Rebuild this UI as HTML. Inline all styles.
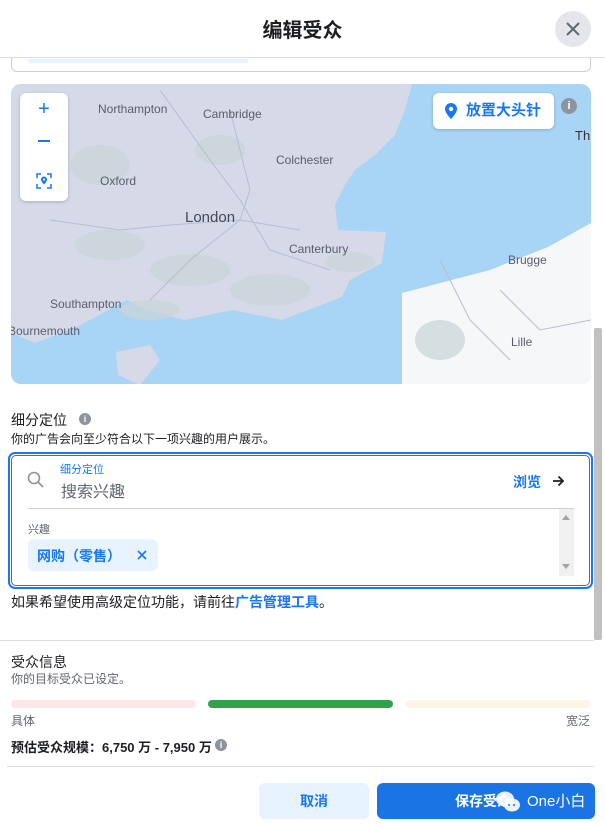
<!DOCTYPE html>
<html><head><meta charset="utf-8"><style>
*{margin:0;padding:0;box-sizing:border-box}
body{width:605px;height:826px;overflow:hidden;background:#fff;font-family:"Liberation Sans","Noto Sans CJK SC",sans-serif;position:relative;color:#1c1e21}
.a{position:absolute}
</style></head><body>
<div class="a" style="left:0;top:0;width:605px;height:58px;border-bottom:1px solid #dadde1;background:#fff;z-index:3">
 <div class="a" style="left:0;width:605px;top:14px;text-align:center;font-size:20px;font-weight:bold">编辑受众</div>
 <div class="a" style="left:555px;top:11px;width:36px;height:36px;border-radius:50%;background:#e4e6eb"></div>
 <svg class="a" style="left:563px;top:19px" width="20" height="20"><path d="M4 4L16 16M16 4L4 16" stroke="#606770" stroke-width="2"/></svg>
</div>
<div class="a" style="left:11px;top:50px;width:580px;height:22px;border:1px solid #ccd0d5;border-top:none;border-radius:0 0 6px 6px"></div>
<div class="a" style="left:28px;top:59px;width:220px;height:4px;background:#e7f3ff"></div>

<svg class="a" style="left:11px;top:84px;border-radius:10px" width="580" height="300" viewBox="11 84 580 300">
<rect x="11" y="84" width="580" height="300" fill="#a8d4f5"/>
<path d="M11 84L412 84L405 110L395 135L375 155L355 170L345 185L335 205L338 230L386 232L382 263L350 280L342 297L282 320L232 310L185 320L147 310L127 300L77 327L35 343L11 333Z" fill="#d5d9e8"/>
<path d="M116 352L150 345L160 360L140 385L118 375Z" fill="#d5d9e8"/>
<path d="M402 384L402 293L490 270L548 247L591 223L591 384Z" fill="#f6f7f9"/>
<g fill="#c9d6d8" opacity=".75"><ellipse cx="100" cy="165" rx="30" ry="20"/><ellipse cx="110" cy="245" rx="35" ry="15"/><ellipse cx="190" cy="270" rx="40" ry="16"/><ellipse cx="270" cy="290" rx="40" ry="16"/><ellipse cx="150" cy="310" rx="30" ry="10"/><ellipse cx="350" cy="262" rx="25" ry="10"/><ellipse cx="440" cy="340" rx="25" ry="20"/><ellipse cx="220" cy="150" rx="25" ry="15"/></g>
<g stroke="#b8bdd0" fill="none" stroke-width="1"><path d="M160 90L210 160L240 200L270 250L330 270"/><path d="M230 110L250 190L240 220"/><path d="M50 220L120 230L170 225L240 220L300 230"/><path d="M240 220L190 260L150 300"/><path d="M440 260L470 320L510 360M500 290L540 330L591 320"/></g>
<g font-family="Liberation Sans,sans-serif" font-size="12" fill="#5a5e6c">
<text x="98" y="113">Northampton</text><text x="203" y="118">Cambridge</text><text x="276" y="164">Colchester</text><text x="100" y="185">Oxford</text>
<text x="185" y="222" font-size="15" fill="#454955">London</text><text x="289" y="253">Canterbury</text><text x="50" y="308">Southampton</text><text x="8" y="335">Bournemouth</text><text x="508" y="264">Brugge</text><text x="511" y="346">Lille</text><text x="575" y="140" font-size="13" fill="#333">Th</text></g>
</svg>
<div class="a" style="left:20px;top:93px;width:48px;height:108px;background:#fff;border-radius:6px;box-shadow:0 1px 3px rgba(0,0,0,.2)">
 <div class="a" style="left:0;width:48px;top:5px;text-align:center;color:#1877f2;font-size:20px">+</div>
 <div class="a" style="left:18px;top:47px;width:12px;height:2px;background:#1877f2"></div>
 <svg class="a" style="left:16px;top:80px" width="16" height="16"><path d="M1 5V1H5M11 1H15V5M15 11V15H11M5 15H1V11" stroke="#1877f2" fill="none" stroke-width="1.5"/><path d="M8 3.5a3 3 0 0 1 3 3c0 2-3 5-3 5s-3-3-3-5a3 3 0 0 1 3-3z" fill="#1877f2"/><circle cx="8" cy="6.5" r="1.1" fill="#fff"/></svg>
</div>
<div class="a" style="left:433px;top:93px;width:121px;height:36px;background:#fff;border-radius:6px;box-shadow:0 1px 3px rgba(0,0,0,.2);color:#1877f2;font-weight:bold;font-size:15px;line-height:36px;padding-left:33px">放置大头针</div>
<svg class="a" style="left:444px;top:102px" width="14" height="18"><path d="M7 1a6 6 0 0 1 6 6c0 4-6 10-6 10S1 11 1 7a6 6 0 0 1 6-6z" fill="#1877f2"/><circle cx="7" cy="7" r="2.2" fill="#fff"/></svg>
<div class="a" style="left:561px;top:98px;width:16px;height:16px;border-radius:50%;background:#8d949e;color:#fff;font-size:11px;font-weight:bold;text-align:center;line-height:16px">i</div>

<div class="a" style="left:594px;top:328px;width:8px;height:312px;background:#c1c1c1;border-radius:2px"></div>

<div class="a" style="left:11px;top:410px;font-size:14px">细分定位</div>
<div class="a" style="left:79px;top:413px;width:12px;height:12px;border-radius:50%;background:#8d949e;color:#fff;font-size:9px;font-weight:bold;text-align:center;line-height:12px">i</div>
<div class="a" style="left:11px;top:430px;font-size:12px;color:#1c1e21">你的广告会向至少符合以下一项兴趣的用户展示。</div>
<div class="a" style="left:8px;top:452px;width:585px;height:137px;border:2px solid #1877f2;border-radius:7px"></div>
<div class="a" style="left:11px;top:455px;width:579px;height:131px;border:1px solid #606770;border-radius:5px"></div>
<svg class="a" style="left:27px;top:471px" width="18" height="18"><circle cx="7" cy="7" r="5.5" stroke="#8d949e" stroke-width="1.6" fill="none"/><path d="M11 11L16 16" stroke="#8d949e" stroke-width="1.6"/></svg>
<div class="a" style="left:60px;top:461px;font-size:11px;color:#1877f2">细分定位</div>
<div class="a" style="left:61px;top:478px;font-size:16px;color:#606770">搜索兴趣</div>
<div class="a" style="left:513px;top:472px;font-size:14px;font-weight:bold;color:#1877f2">浏览</div>
<svg class="a" style="left:551px;top:474px" width="14" height="14"><path d="M2 7H12M7.5 2.5L12 7L7.5 11.5" stroke="#1c1e21" stroke-width="1.8" fill="none"/></svg>
<div class="a" style="left:28px;top:508px;width:546px;height:1px;background:#ccd0d5"></div>
<div class="a" style="left:559px;top:509px;width:15px;height:67px;background:#f0f0f0"></div>
<div class="a" style="left:562px;top:515px;border:4px solid transparent;border-bottom:5px solid #a3a3a3;border-top:none"></div>
<div class="a" style="left:562px;top:564px;border:4px solid transparent;border-top:5px solid #a3a3a3;border-bottom:none"></div>
<div class="a" style="left:28px;top:521px;font-size:11px;color:#606770">兴趣</div>
<div class="a" style="left:28px;top:539px;width:130px;height:32px;background:#e7f3ff;border-radius:6px"></div>
<div class="a" style="left:37px;top:546px;font-size:14px;font-weight:bold;color:#1877f2">网购（零售）</div>
<svg class="a" style="left:136px;top:549px" width="12" height="12"><path d="M2 2L10 10M10 2L2 10" stroke="#1877f2" stroke-width="1.6"/></svg>
<div class="a" style="left:11px;top:592px;font-size:14px">如果希望使用高级定位功能，请前往<b style="color:#1877f2">广告管理工具</b>。</div>

<div class="a" style="left:0;top:640px;width:594px;height:1px;background:#dadde1"></div>
<div class="a" style="left:11px;top:652px;font-size:14px">受众信息</div>
<div class="a" style="left:11px;top:670px;font-size:12px;color:#606770">你的目标受众已设定。</div>
<div class="a" style="left:11px;top:700px;width:185px;height:8px;border-radius:4px;background:#fce8ea"></div>
<div class="a" style="left:208px;top:700px;width:185px;height:8px;border-radius:4px;background:#31a24c"></div>
<div class="a" style="left:405px;top:700px;width:185px;height:8px;border-radius:4px;background:#fdf5e6"></div>
<div class="a" style="left:11px;top:712px;font-size:12px;color:#606770">具体</div>
<div class="a" style="left:566px;top:712px;font-size:12px;color:#606770">宽泛</div>
<div class="a" style="left:11px;top:737px;font-size:13px;font-weight:bold">预估受众规模：6,750 万 - 7,950 万</div>
<div class="a" style="left:215px;top:739px;width:12px;height:12px;border-radius:50%;background:#8d949e;color:#fff;font-size:9px;font-weight:bold;text-align:center;line-height:12px">i</div>
<div class="a" style="left:7px;top:766px;width:587px;height:1px;background:#dadde1"></div>
<div class="a" style="left:259px;top:783px;width:110px;height:36px;background:#e7f3ff;border-radius:6px;color:#1877f2;font-weight:bold;font-size:14px;text-align:center;line-height:36px">取消</div>
<div class="a" style="left:377px;top:783px;width:218px;height:36px;background:#1b74e4;border-radius:6px;color:#fff;font-weight:bold;font-size:14px;line-height:36px;padding-left:78px">保存受众</div>
<svg class="a" style="left:495px;top:790px" width="26" height="24"><ellipse cx="10" cy="9" rx="9" ry="7.5" fill="#fff" opacity=".9"/><ellipse cx="17" cy="15" rx="8" ry="6.5" fill="#fff" opacity=".9"/><circle cx="14" cy="15" r="1" fill="#1b74e4"/><circle cx="19" cy="15" r="1" fill="#1b74e4"/></svg>
<div class="a" style="left:527px;top:790px;font-size:15px;color:#fff">One小白</div>
</body></html>
